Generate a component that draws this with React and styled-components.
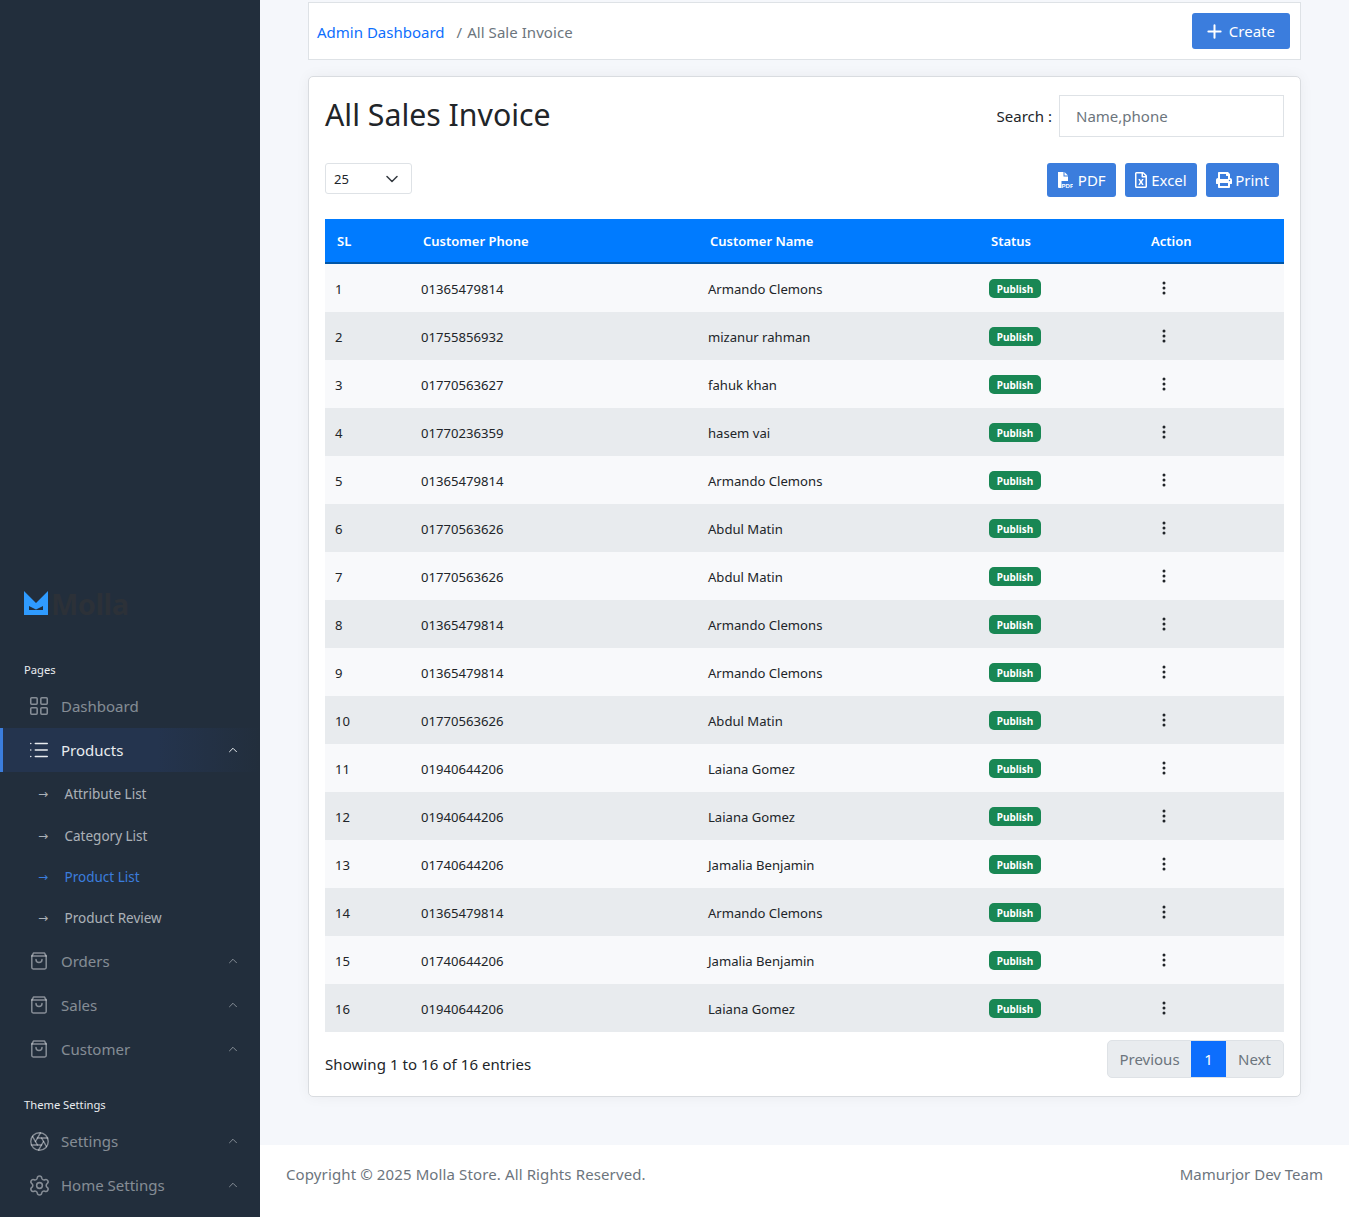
import React from 'react';
import styled, { createGlobalStyle } from 'styled-components';
import { LayoutGrid, List, ChevronUp, Aperture, Settings, Plus } from 'lucide-react';
import { BsThreeDotsVertical } from 'react-icons/bs';
import { FaPrint, FaRegFileExcel } from 'react-icons/fa';

const Global = createGlobalStyle`
  * { box-sizing: border-box; }
  html, body { margin: 0; padding: 0; }
  body {
    font-family: 'Noto Sans', 'Open Sans', 'Liberation Sans', sans-serif;
    background: #f5f7fb;
    color: #212529;
    overflow: hidden;
  }
`;

const Shell = styled.div`
  display: flex;
  height: 1217px;
`;

const Sidebar = styled.aside`
  width: 260px;
  flex: none;
  background: #222e3c;
  display: flex;
  flex-direction: column;
  justify-content: flex-end;
  padding-bottom: 10px;
`;

const Brand = styled.div`
  display: flex;
  align-items: flex-start;
  padding: 0 24px;
  height: 40px;
  margin-bottom: 30px;
  font-size: 29px;
  line-height: 26px;
  font-weight: 700;
  letter-spacing: -0.5px;
  color: #2c3138;
  svg { width: 24px; height: 24px; flex: none; margin-right: 3px; }
`;

const SectionLabel = styled.div`
  font-size: 11.2px;
  line-height: 18px;
  color: #e9ecef;
  padding: 0 24px;
  margin-bottom: 5px;
  margin-top: ${(p) => p.$top || 0}px;
`;

const NavRow = styled.div`
  height: 44px;
  display: flex;
  align-items: center;
  padding-left: ${(p) => (p.$active ? 27 : 30)}px;
  padding-right: 20px;
  font-size: 15px;
  color: ${(p) => (p.$active ? '#e9ecef' : 'rgba(233,236,239,.5)')};
  border-left: ${(p) => (p.$active ? '3px solid #3b7ddd' : '0')};
  background: ${(p) => (p.$active ? 'linear-gradient(90deg, #24344e 0%, #24344e 60%, #222e3c 100%)' : 'transparent')};
`;

const IconSlot = styled.span`
  width: 18px;
  height: 18px;
  flex: none;
  margin-right: 13px;
  display: flex;
  align-items: center;
  justify-content: center;
  svg { flex: none; }
`;

const NavText = styled.span`
  flex: 1;
`;

const Caret = styled(ChevronUp)`
  width: 14px;
  height: 14px;
  flex: none;
`;

const SubList = styled.div`
  padding-top: 1.5px;
`;

const SubRow = styled.div`
  height: 41.33px;
  display: flex;
  align-items: center;
  padding-left: 38px;
  font-size: 13.5px;
  color: ${(p) => (p.$active ? '#3b7ddd' : 'rgba(233,236,239,.7)')};
`;

const Arrow = styled.span`
  width: 26.5px;
  font-family: 'DejaVu Sans', sans-serif;
  font-size: 12px;
`;

const Main = styled.div`
  flex: 1;
  min-width: 0;
  display: flex;
  flex-direction: column;
`;

const Content = styled.main`
  flex: 1;
  padding: 2px 48px 0;
`;

const Breadcrumb = styled.div`
  height: 58px;
  background: #fff;
  border: 1px solid #dee2e6;
  display: flex;
  align-items: center;
  justify-content: space-between;
  padding: 0 10px 0 8px;
  font-size: 15px;
`;

const Crumbs = styled.div`
  display: flex;
  gap: 12px;
  color: #6c757d;
  padding-top: 1px;
`;

const CrumbLink = styled.a`
  color: #0d6efd;
`;

const CrumbCurrent = styled.span`
  letter-spacing: 0.05px;
`;

const CrumbSep = styled.span`
  margin-right: 5px;
`;

const ActionButton = styled.button`
  border: 0;
  background: #3b7ddd;
  color: #fff;
  border-radius: 3px;
  font: inherit;
  font-size: 15px;
  height: ${(p) => p.$height || 34}px;
  padding: 0 ${(p) => p.$padRight || 10}px 0 ${(p) => p.$padLeft || 10}px;
  display: inline-flex;
  align-items: center;
  gap: ${(p) => p.$gap ?? 3}px;
`;

const Card = styled.section`
  margin-top: 16px;
  height: 1021px;
  background: #fff;
  border: 1px solid #d9dce0;
  border-radius: 5px;
  box-shadow: 0 0 14px rgba(33, 37, 41, 0.05);
  padding: 18px 16px 0;
`;

const CardHead = styled.div`
  display: flex;
  justify-content: space-between;
  align-items: center;
  height: 42px;
`;

const Title = styled.h1`
  margin: -3px 0 0;
  font-size: 30.25px;
  font-weight: 400;
  line-height: 40px;
`;

const SearchWrap = styled.div`
  display: flex;
  align-items: center;
  gap: 7px;
  font-size: 15px;
`;

const SearchInput = styled.div`
  width: 225px;
  height: 42px;
  border: 1px solid #dee2e6;
  color: #6c757d;
  display: flex;
  align-items: center;
  padding-left: 16px;
  font-size: 15px;
`;

const ToolRow = styled.div`
  display: flex;
  justify-content: space-between;
  align-items: flex-start;
  margin-top: 26px;
  height: 56px;
  padding-right: 5px;
`;

const PageSize = styled.div`
  width: 87px;
  height: 31px;
  border: 1px solid #dee2e6;
  border-radius: 3px;
  display: flex;
  align-items: center;
  justify-content: space-between;
  padding: 0 13px 0 8px;
  font-size: 13px;
  color: #212529;
`;

const Buttons = styled.div`
  display: flex;
  gap: 9.5px;
`;

const Table = styled.table`
  width: 100%;
  table-layout: fixed;
  border-collapse: separate;
  border-spacing: 0;
`;

const Th = styled.th`
  background: #007bff;
  color: #fff;
  font-size: 13px;
  line-height: 20px;
  font-weight: 600;
  text-align: left;
  padding: 0 12px;
  height: 45px;
  border-bottom: 2px solid #0056a8;
`;

const Row = styled.tr`
  background: ${(p) => (p.$even ? '#e8ebee' : '#f8f9fb')};
`;

const Td = styled.td`
  height: 48px;
  padding: 1px 10px 0;
  font-size: 13.1px;
  line-height: 20px;
  color: #212529;
`;

const Badge = styled.span`
  display: flex;
  align-items: center;
  justify-content: center;
  width: 52px;
  height: 19px;
  border-radius: 5px;
  background: #198754;
  color: #fff;
  font-size: 10px;
  font-weight: 700;
`;

const Dots = styled(BsThreeDotsVertical)`
  display: block;
  width: 16px;
  height: 16px;
  margin-left: 6.5px;
  margin-top: -1px;
`;

const TableFoot = styled.div`
  display: flex;
  justify-content: space-between;
  margin-top: 8px;
`;

const Showing = styled.div`
  font-size: 15px;
  letter-spacing: 0.07px;
  padding-top: 14px;
`;

const Pager = styled.div`
  display: flex;
  height: 38px;
  border-radius: 5px;
  overflow: hidden;
  font-size: 15px;
  background: #e9ecef;
  color: #6c757d;
  border: 1px solid #dee2e6;
`;

const PageBtn = styled.div`
  display: flex;
  align-items: center;
  justify-content: center;
  width: ${(p) => p.$w}px;
  margin: ${(p) => (p.$active ? '-1px 0' : '0')};
  background: ${(p) => (p.$active ? '#0d6efd' : 'transparent')};
  color: ${(p) => (p.$active ? '#fff' : 'inherit')};
`;

const Footer = styled.footer`
  height: 72px;
  background: #fff;
  display: flex;
  justify-content: space-between;
  padding: 19px 26px 0;
  font-size: 15px;
  line-height: 20px;
  color: #6c757d;
`;

const Copyright = styled.span`
  letter-spacing: 0.12px;
`;

const BagIcon = () => (
  <svg width="18" height="18" viewBox="0 0 18 18" fill="none" stroke="currentColor" strokeWidth="1.5" strokeLinecap="round" strokeLinejoin="round">
    <path d="M3.6 1h10.8l1.8 3v11.6a1.4 1.4 0 0 1-1.4 1.4H3.2a1.4 1.4 0 0 1-1.4-1.4V4z" />
    <path d="M1.8 4h14.4" />
    <path d="M6 7.4a3 3 0 0 0 6 0" />
  </svg>
);

const LogoMark = () => (
  <svg viewBox="0 0 24 24">
    <path fill="#2f9bff" d="M0 0l12 12L24 0v24H0z" />
    <path fill="#222e3c" d="M5 15l7 3.5 7-3.5v4H5z" />
  </svg>
);

const PdfIcon = () => (
  <svg width="16" height="16" viewBox="0 0 16 16">
    <path fill="#fff" d="M1 0h5.5v4.5H11V9H4.5v7H2a1 1 0 0 1-1-1z" />
    <path fill="#fff" d="M7.5 0L11 3.5H7.5z" />
    <text x="4.6" y="15.6" fill="#fff" fontSize="6" fontWeight="700" fontFamily="'Liberation Sans', sans-serif">PDF</text>
  </svg>
);

const rows = [
  ['01365479814', 'Armando Clemons'],
  ['01755856932', 'mizanur rahman'],
  ['01770563627', 'fahuk khan'],
  ['01770236359', 'hasem vai'],
  ['01365479814', 'Armando Clemons'],
  ['01770563626', 'Abdul Matin'],
  ['01770563626', 'Abdul Matin'],
  ['01365479814', 'Armando Clemons'],
  ['01365479814', 'Armando Clemons'],
  ['01770563626', 'Abdul Matin'],
  ['01940644206', 'Laiana Gomez'],
  ['01940644206', 'Laiana Gomez'],
  ['01740644206', 'Jamalia Benjamin'],
  ['01365479814', 'Armando Clemons'],
  ['01740644206', 'Jamalia Benjamin'],
  ['01940644206', 'Laiana Gomez'],
];

const subItems = ['Attribute List', 'Category List', 'Product List', 'Product Review'];

export default function App() {
  return (
    <Shell>
      <Global />
      <Sidebar>
        <Brand><LogoMark />Molla</Brand>
        <SectionLabel>Pages</SectionLabel>
        <NavRow><IconSlot><LayoutGrid size={22} strokeWidth={1.7} /></IconSlot><NavText>Dashboard</NavText></NavRow>
        <NavRow $active><IconSlot><List size={22} strokeWidth={1.7} /></IconSlot><NavText>Products</NavText><Caret strokeWidth={1.7} /></NavRow>
        <SubList>
          {subItems.map((s) => (
            <SubRow key={s} $active={s === 'Product List'}><Arrow>→</Arrow>{s}</SubRow>
          ))}
        </SubList>
        {['Orders', 'Sales', 'Customer'].map((s) => (
          <NavRow key={s}><IconSlot><BagIcon /></IconSlot><NavText>{s}</NavText><Caret strokeWidth={1.7} /></NavRow>
        ))}
        <SectionLabel $top={25}>Theme Settings</SectionLabel>
        <NavRow><IconSlot><Aperture size={21} strokeWidth={1.6} /></IconSlot><NavText>Settings</NavText><Caret strokeWidth={1.7} /></NavRow>
        <NavRow><IconSlot><Settings size={23} strokeWidth={1.6} /></IconSlot><NavText>Home Settings</NavText><Caret strokeWidth={1.7} /></NavRow>
      </Sidebar>
      <Main>
        <Content>
          <Breadcrumb>
            <Crumbs>
              <CrumbLink>Admin Dashboard</CrumbLink>
              <CrumbCurrent><CrumbSep>/</CrumbSep>All Sale Invoice</CrumbCurrent>
            </Crumbs>
            <ActionButton $height={36} $padLeft={12} $padRight={15} $gap={4}><Plus size={21} strokeWidth={2.3} />Create</ActionButton>
          </Breadcrumb>
          <Card>
            <CardHead>
              <Title>All Sales Invoice</Title>
              <SearchWrap>Search :<SearchInput>Name,phone</SearchInput></SearchWrap>
            </CardHead>
            <ToolRow>
              <PageSize>25
                <svg width="12" height="8" viewBox="0 0 12 8" fill="none" stroke="#343a40" strokeWidth="1.5" strokeLinecap="round" strokeLinejoin="round"><path d="M1 1.5l5 5 5-5" /></svg>
              </PageSize>
              <Buttons>
                <ActionButton $gap={5}><PdfIcon />PDF</ActionButton>
                <ActionButton $padLeft={8} $gap={2}><FaRegFileExcel size={16} />Excel</ActionButton>
                <ActionButton><FaPrint size={16} />Print</ActionButton>
              </Buttons>
            </ToolRow>
            <Table>
              <colgroup>
                <col width="86" /><col width="287" /><col width="281" /><col width="160" /><col width="145" />
              </colgroup>
              <thead>
                <tr>
                  <Th>SL</Th><Th>Customer Phone</Th><Th>Customer Name</Th><Th>Status</Th><Th>Action</Th>
                </tr>
              </thead>
              <tbody>
                {rows.map(([phone, name], i) => (
                  <Row key={i} $even={i % 2 === 1}>
                    <Td>{i + 1}</Td>
                    <Td>{phone}</Td>
                    <Td>{name}</Td>
                    <Td><Badge>Publish</Badge></Td>
                    <Td><Dots /></Td>
                  </Row>
                ))}
              </tbody>
            </Table>
            <TableFoot>
              <Showing>Showing 1 to 16 of 16 entries</Showing>
              <Pager>
                <PageBtn $w={83}>Previous</PageBtn>
                <PageBtn $w={35} $active>1</PageBtn>
                <PageBtn $w={57}>Next</PageBtn>
              </Pager>
            </TableFoot>
          </Card>
        </Content>
        <Footer>
          <Copyright>Copyright © 2025 Molla Store. All Rights Reserved.</Copyright>
          <span>Mamurjor Dev Team</span>
        </Footer>
      </Main>
    </Shell>
  );
}
